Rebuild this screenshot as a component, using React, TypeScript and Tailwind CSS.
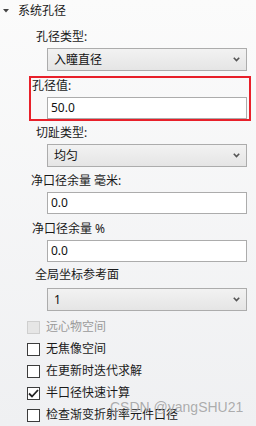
// 系统孔径 属性面板
const font = "font-['Noto_Sans','Noto_Sans_CJK_SC',sans-serif]";

function Chevron() {
  return (
    <svg width="7" height="5" viewBox="0 0 7 5" className="shrink-0">
      <path d="M0.8 0.8 L3.5 3.6 L6.2 0.8" fill="none" stroke="#555" strokeWidth="1.6" />
    </svg>
  );
}

function Dropdown({ value, className = '' }: { value: string; className?: string }) {
  return (
    <div
      className={`ml-[47px] flex h-[23px] w-[200px] items-center justify-between border border-[#acacac] bg-gradient-to-b from-[#f2f2f2] to-[#e5e5e5] pl-[6px] pr-[6px] text-[12px] text-[#111] ${className}`}
    >
      <span className="leading-none">{value}</span>
      <Chevron />
    </div>
  );
}

function TextBox({ value, className = '' }: { value: string; className?: string }) {
  return (
    <div
      className={`flex h-[22px] w-[200px] items-center border border-[#acacac] bg-white pl-[3px] text-[12px] text-[#111] ${className}`}
    >
      <span className="leading-none">{value}</span>
    </div>
  );
}

function Label({ text, className = '' }: { text: string; className?: string }) {
  return <div className={`h-4 text-[12px] leading-4 text-[#1a1a1a] ${className}`}>{text}</div>;
}

interface CheckProps {
  label: string;
  checked?: boolean;
  disabled?: boolean;
}

function Check({ label, checked, disabled }: CheckProps) {
  return (
    <div className="flex h-[22px] items-center pl-[27px]">
      <div
        className={`flex h-[13px] w-[13px] items-center justify-center border ${
          disabled ? 'border-[#cfcfcf] bg-[#e6e6e6]' : 'border-[#3c3c3c] bg-white'
        }`}
      >
        {checked && (
          <svg width="11" height="9" viewBox="0 0 11 9">
            <path d="M1 4.5 L4 7.5 L10 1" fill="none" stroke="#222" strokeWidth="1.8" />
          </svg>
        )}
      </div>
      <span className={`ml-[6px] text-[12px] leading-none ${disabled ? 'text-[#9a9a9a]' : 'text-[#1a1a1a]'}`}>
        {label}
      </span>
    </div>
  );
}

export default function App() {
  return (
    <div
      className={`relative h-[426px] w-[256px] overflow-hidden bg-gradient-to-b from-[#fbfbfb] to-[#eff0f2] ${font}`}
    >
      {/* header */}
      <div className="flex h-[22px] items-center pl-[3px]">
        <svg width="6" height="4" viewBox="0 0 6 4">
          <path d="M0 0 L6 0 L3 3.5 Z" fill="#444" />
        </svg>
        <span className="ml-[9px] text-[12px] leading-none text-[#1a1a1a]">系统孔径</span>
      </div>

      <Label text="孔径类型:" className="mt-[7px] pl-[36px]" />
      <Dropdown value="入瞳直径" className="mt-[3px]" />

      {/* highlighted field */}
      <div className="ml-[29px] mt-[5px] h-[45px] w-[222px] border-2 border-[#e8202a]">
        <Label text="孔径值:" className="pl-[1px]" />
        <TextBox value="50.0" className="ml-[16px] mt-[3px]" />
      </div>

      <Label text="切趾类型:" className="mt-[4px] pl-[36px]" />
      <Dropdown value="均匀" className="mt-[3px]" />

      <Label text="净口径余量 毫米:" className="mt-[6px] pl-[31px]" />
      <TextBox value="0.0" className="ml-[47px] mt-[3px]" />

      <Label text="净口径余量 %" className="mt-[7px] pl-[32px]" />
      <TextBox value="0.0" className="ml-[47px] mt-[3px]" />

      <Label text="全局坐标参考面" className="mt-[5px] pl-[35px]" />
      <Dropdown value="1" className="mt-[5px]" />

      <div className="mt-[5px]">
        <Check label="远心物空间" disabled />
        <Check label="无焦像空间" />
        <Check label="在更新时迭代求解" />
        <Check label="半口径快速计算" checked />
        <Check label="检查渐变折射率元件口径" />
      </div>

      {/* watermark */}
      <div className="pointer-events-none absolute left-[110px] top-[399px] font-['Liberation_Sans',sans-serif] text-[14px] leading-4 text-[#9a9a9a]/80">
        CSDN @yangSHU21
      </div>
    </div>
  );
}
